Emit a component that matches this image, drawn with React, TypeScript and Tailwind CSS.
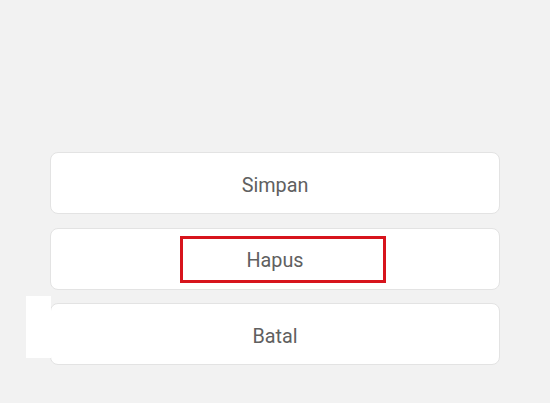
export default function App() {
    const buttons = ["Simpan", "Hapus", "Batal"]

    return (
        <div
            className="relative w-[550px] h-[403px] bg-[#f2f2f2] pt-[152px] px-[50px]"
            style={{ fontFamily: "Roboto, 'Liberation Sans', sans-serif" }}
        >
            <div className="flex flex-col gap-[13.5px]">
                {buttons.map((label) => (
                    <div
                        key={label}
                        className="relative h-[62px] w-[450px] bg-white border border-[#e3e3e3] rounded-lg flex items-center justify-center pt-[5px] text-[19.8px] text-[#606060]"
                    >
                        {label}
                        {label === "Hapus" && (
                            <div className="absolute left-[129px] top-[7px] w-[206px] h-[47px] border-[3px] border-[#d7141c]" />
                        )}
                    </div>
                ))}
            </div>
            {/* stray white patch at left of last button */}
            <div className="absolute left-[26px] top-[296px] w-[25px] h-[62px] bg-white" />
        </div>
    )
}
